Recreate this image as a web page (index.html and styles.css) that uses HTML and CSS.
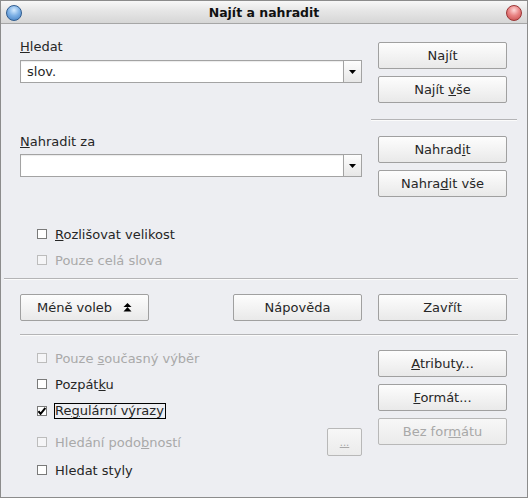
FILE: index.html
```html
<!DOCTYPE html>
<html lang="cs">
<head>
    <meta charset="UTF-8">
    <title>Najít a nahradit</title>
    <link rel="stylesheet" href="styles.css">
</head>
<body>

    <div class="window">
        <div class="titlebar">
            <span class="orb orb-blue"></span>
            <span class="title">Najít a nahradit</span>
            <span class="orb orb-red"></span>
        </div>

        <div class="content">
            <div class="top">
                <div class="left">
                    <div class="field-label first"><u>H</u>ledat</div>
                    <div class="combo">
                        <input type="text" value="slov.">
                        <span class="drop"><svg width="7" height="4" viewBox="0 0 7 4"><polygon points="0,0 7,0 3.5,4" fill="#000"/></svg></span>
                    </div>

                    <div class="field-label second"><u>N</u>ahradit za</div>
                    <div class="combo second-combo">
                        <input type="text" value="">
                        <span class="drop"><svg width="7" height="4" viewBox="0 0 7 4"><polygon points="0,0 7,0 3.5,4" fill="#000"/></svg></span>
                    </div>

                    <div class="checks">
                        <div class="opt"><span class="box"></span><span><u>R</u>ozlišovat velikost</span></div>
                        <div class="opt disabled"><span class="box"></span><span>Pouze celá slova</span></div>
                    </div>
                </div>

                <div class="right">
                    <button class="btn">Najít</button>
                    <button class="btn">Najít <u>v</u>še</button>
                    <div class="sep short"></div>
                    <button class="btn">Nahrad<u>i</u>t</button>
                    <button class="btn">Nahra<u>d</u>it vše</button>
                </div>
            </div>

            <div class="sep wide"></div>

            <div class="actions">
                <button class="btn more">Méně voleb
                    <svg width="9" height="9" viewBox="0 0 9 9"><polygon points="4.5,0 8.5,4 0.5,4" fill="#000"/><polygon points="4.5,4 8.5,8.5 0.5,8.5" fill="#000"/></svg>
                </button>
                <button class="btn help">Nápověda</button>
                <button class="btn">Zavřít</button>
            </div>

            <div class="sep lower"></div>

            <div class="bottom">
                <div class="left">
                    <div class="opt disabled"><span class="box"></span><span>Pouze <u>s</u>oučasný výběr</span></div>
                    <div class="opt"><span class="box"></span><span>Pozpát<u>k</u>u</span></div>
                    <div class="opt checked">
                        <span class="box"><svg width="8" height="8" viewBox="0 0 8 8"><path d="M0.5 4.2 L2.6 6.8 L7.4 1" stroke="#000" stroke-width="2" fill="none"/></svg></span>
                        <span class="focus">Re<u>g</u>ulární výrazy</span>
                    </div>
                    <div class="opt disabled with-btn">
                        <span class="box"></span><span>Hledání podo<u>b</u>ností</span>
                        <button class="btn small" disabled><u>...</u></button>
                    </div>
                    <div class="opt"><span class="box"></span><span>Hledat styly</span></div>
                </div>

                <div class="right">
                    <button class="btn"><u>A</u>tributy...</button>
                    <button class="btn"><u>F</u>ormát...</button>
                    <button class="btn" disabled>Bez for<u>m</u>átu</button>
                </div>
            </div>
        </div>
    </div>

</body>
</html>
```

FILE: styles.css
```css
body {
    margin: 0;
    font-family: "DejaVu Sans", Verdana, sans-serif;
    font-size: 13px;
    color: #262626;
}
.window {
    width: 528px;
    height: 498px;
    box-sizing: border-box;
    border: 1px solid #8c8c8c;
    background-color: #edeef2;
}
.titlebar {
    height: 22px;
    display: flex;
    align-items: center;
    padding: 0 5px;
    border-bottom: 1px solid #a6a6a6;
    background: linear-gradient(#f8f8f8, #e6e6e6 45%, #d6d6d6);
}
.title {
    flex: 1;
    text-align: center;
    font-weight: bold;
    font-size: 12.5px;
    color: #111;
}
.orb {
    width: 14px;
    height: 14px;
    border-radius: 50%;
    margin-top: 1px;
}
.orb-blue {
    border: 1px solid #2f5c8f;
    background: radial-gradient(circle at 50% 30%, #d6ecff 0, #7fb2e6 45%, #3f7bc0 100%);
}
.orb-red {
    border: 1px solid #9a3434;
    background: radial-gradient(circle at 50% 30%, #ffd9d9 0, #e98484 45%, #c44646 100%);
}
.content {
    padding-left: 19px;
}
.top,
.bottom {
    display: grid;
    grid-template-columns: 342px 129px;
    column-gap: 16px;
}
.field-label {
    line-height: 16px;
}
.field-label.first {
    margin-top: 15px;
}
.field-label.second {
    margin-top: 51px;
}
.combo {
    display: flex;
    height: 23px;
    margin-top: 5px;
}
.second-combo {
    margin-top: 4px;
}
.combo input {
    flex: 1;
    min-width: 0;
    margin: 0;
    padding: 0 6px;
    border: 1px solid #a3a3a3;
    border-right: none;
    box-shadow: inset 0 1px 1px rgba(0, 0, 0, 0.08);
    background: #fff;
    font-family: inherit;
    font-size: 13px;
    color: #262626;
    outline: none;
}
.drop {
    width: 19px;
    box-sizing: border-box;
    display: flex;
    align-items: center;
    justify-content: center;
    border: 1px solid #a3a3a3;
    background: linear-gradient(#fdfdfd, #e7e7e7);
}
.right {
    display: flex;
    flex-direction: column;
}
.top .right {
    padding-top: 18px;
}
.btn {
    height: 27px;
    margin: 0 0 7px 0;
    padding: 0;
    border: 1px solid #a0a0a0;
    border-radius: 2px;
    background: linear-gradient(#fdfdfd, #e9e9e9);
    font-family: inherit;
    font-size: 13px;
    color: #262626;
    text-align: center;
}
.btn:disabled {
    color: #a8a8a8;
    border-color: #b8b8b8;
    background: linear-gradient(#f7f7f7, #ebebeb);
}
.sep {
    height: 1px;
    background: #b4b4b6;
    border-bottom: 1px solid #fbfbfb;
}
.sep.short {
    margin: 9px -10px 15px -7px;
}
.sep.wide {
    margin: 5px 9px 0 -16px;
}
.sep.lower {
    margin: 13px 9px 0 0;
}
.checks {
    margin-top: 44px;
}
.opt {
    height: 26px;
    display: flex;
    align-items: center;
    padding-left: 17px;
}
.box {
    width: 8px;
    height: 8px;
    border: 1px solid #7a7a7a;
    background: #fff;
    margin-right: 8px;
    display: flex;
    align-items: center;
    justify-content: center;
}
.opt.disabled {
    color: #a9a9a9;
}
.opt.disabled .box {
    border-color: #bcbcbc;
    background: #f5f5f7;
}
.focus {
    border: 1px solid #000;
    margin-left: -1px;
    padding: 0 1px 0 0;
    line-height: 14px;
}
.actions {
    display: flex;
    margin-top: 14px;
}
.actions .btn {
    width: 129px;
    margin: 0;
}
.more {
    display: flex;
    align-items: center;
    justify-content: center;
    gap: 11px;
}
.help {
    margin-left: 84px !important;
    margin-right: 16px !important;
}
.bottom .left {
    padding-top: 9px;
}
.bottom .right {
    padding-top: 14px;
}
.bottom .opt.checked {
    margin-top: 1px;
}
.with-btn {
    height: 28px;
    margin-top: 4px;
}
.with-btn .btn.small {
    width: 35px;
    height: 28px;
    margin: 0 0 0 auto;
    font-size: 10px;
}
.with-btn + .opt {
    margin-top: 1px;
}
```
